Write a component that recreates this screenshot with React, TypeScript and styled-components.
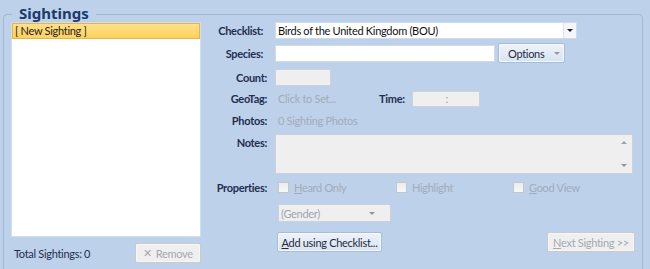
import React from 'react';
import styled, { createGlobalStyle } from 'styled-components';

const GlobalStyle = createGlobalStyle`
  html, body {
    margin: 0;
    padding: 0;
    background: #bdd1ea;
  }
  body {
    font-family: Lato, "Noto Sans", sans-serif;
    font-size: 11px;
    letter-spacing: -0.3px;
    color: #1f2a3d;
  }
`;

const Page = styled.div`
  width: 650px;
  height: 269px;
  overflow: hidden;
  box-sizing: border-box;
  padding: 14px 7px 0 3px;
`;

const Frame = styled.div`
  height: 280px;
  border: 1px solid #a3b7d1;
  border-radius: 4px;
  padding: 0 7px 0 7px;
  background: #bdd1ea;
`;

const Legend = styled.div`
  width: max-content;
  margin: -11px 0 0 1px;
  padding: 0 7px;
  height: 18px;
  line-height: 18px;
  background: #bdd1ea;
  font-family: "Noto Sans", sans-serif;
  font-weight: bold;
  font-size: 15px;
  letter-spacing: 0;
  color: #1d3a6b;
`;

const Body = styled.div`
  display: flex;
`;

const LeftColumn = styled.div`
  width: 191px;
  display: flex;
  flex-direction: column;
`;

const List = styled.div`
  height: 215px;
  box-sizing: border-box;
  background: #fff;
  border: 1px solid #d3deec;
`;

const ListItem = styled.div<{ selected?: boolean }>`
  height: 16px;
  line-height: 14px;
  padding-left: 2px;
  box-sizing: border-box;
  color: #222;
  ${p => p.selected && `
    background: linear-gradient(#ffe08a, #fdd25c);
    border: 1px solid #e5b54c;
  `}
`;

const Footer = styled.div`
  display: flex;
  align-items: center;
  justify-content: space-between;
  margin-top: 6px;
  padding-left: 3px;
`;

const FooterText = styled.span`
  color: #1f2f4f;
`;

const Button = styled.button<{ w: number; disabled?: boolean; start?: boolean }>`
  width: ${p => p.w}px;
  height: 20px;
  box-sizing: border-box;
  padding: 0 0 0 ${p => (p.start ? 9 : 0)}px;
  font: inherit;
  letter-spacing: inherit;
  white-space: nowrap;
  border-radius: 2px;
  display: inline-flex;
  align-items: center;
  justify-content: ${p => (p.start ? 'flex-start' : 'center')};
  gap: ${p => (p.start ? 0 : 4)}px;
  border: 1px solid ${p => (p.disabled ? '#cacaca' : '#a9bcd6')};
  color: ${p => (p.disabled ? '#a3a9b1' : '#1f2a3d')};
  background: ${p => (p.disabled
    ? '#efefef'
    : 'linear-gradient(#eef3fa, #d7e3f2)')};
  box-shadow: inset 0 0 0 1px ${p => (p.disabled ? '#f6f6f6' : '#f5f8fc')};
`;

const Form = styled.div`
  margin-left: 3px;
  flex: 1;
  display: flex;
  flex-direction: column;
`;

const Row = styled.div<{ top: number; h: number; align?: string }>`
  display: flex;
  align-items: ${p => p.align || 'center'};
  margin-top: ${p => p.top}px;
  height: ${p => p.h}px;
`;

const Label = styled.div<{ inset?: number }>`
  width: 63px;
  flex: none;
  box-sizing: border-box;
  padding-right: ${p => p.inset || 0}px;
  margin-right: 8px;
  text-align: right;
  white-space: nowrap;
  font-weight: bold;
  color: #1f2f4f;
  line-height: 17px;
`;

const Field = styled.div<{ w: number; disabled?: boolean; h?: number }>`
  width: ${p => p.w}px;
  height: ${p => p.h || 17}px;
  box-sizing: border-box;
  border: 1px solid ${p => (p.disabled ? '#cdd2d8' : '#d0dbe9')};
  background: ${p => (p.disabled ? '#efefef' : '#fff')};
  display: flex;
  align-items: center;
  position: relative;
  color: ${p => (p.disabled ? '#9da5b0' : '#111')};
  line-height: 15px;
  padding-left: 2px;
`;

const DropButton = styled.div<{ plain?: boolean }>`
  position: absolute;
  right: ${p => (p.plain ? 12 : 0)}px;
  top: 0;
  bottom: 0;
  width: 12px;
  display: flex;
  align-items: center;
  justify-content: center;
  border-left: ${p => (p.plain ? 'none' : '1px solid #dbe3ee')};
  background: ${p => (p.plain ? 'transparent' : '#f4f6f9')};
`;

const Arrow = styled.span<{ faded?: boolean }>`
  width: 0;
  height: 0;
  border-left: 3px solid transparent;
  border-right: 3px solid transparent;
  border-top: 3px solid ${p => (p.faded ? '#8f969f' : '#222')};
`;

const OptionsArrow = styled.span`
  margin-left: 10px;
  display: flex;
`;

const Muted = styled.span<{ w?: number }>`
  color: #a2acb9;
  padding-left: 3px;
  ${p => p.w && `width: ${p.w}px;`}
  line-height: 17px;
`;

const InlineLabel = styled.span`
  font-weight: bold;
  color: #1f2f4f;
  margin-right: 7px;
`;

const ScrollBar = styled.div`
  position: absolute;
  right: 0;
  top: 0;
  bottom: 0;
  width: 16px;
  display: flex;
  flex-direction: column;
  justify-content: space-between;
  align-items: center;
  padding: 6px 0;
  box-sizing: border-box;
`;

const UpArrow = styled.span`
  width: 0;
  height: 0;
  border-left: 3px solid transparent;
  border-right: 3px solid transparent;
  border-bottom: 3px solid #9aa0a8;
`;

const Checks = styled.div`
  display: flex;
  padding-left: 3px;
`;

const Check = styled.label<{ w: number }>`
  width: ${p => p.w}px;
  display: flex;
  align-items: center;
  color: #a2acb9;
  white-space: nowrap;
`;

const Box = styled.span`
  width: 11px;
  height: 11px;
  box-sizing: border-box;
  border: 1px solid #c3c7cd;
  background: linear-gradient(#ececec, #f8f8f8);
  margin-right: 5px;
`;

const Indent = styled.div<{ left: number }>`
  padding-left: ${p => p.left}px;
  display: flex;
`;

const ButtonRow = styled.div`
  display: flex;
  justify-content: space-between;
  padding-left: 2px;
  width: 358px;
`;

export default function App() {
  return (
    <Page>
      <GlobalStyle />
      <Frame>
        <Legend>Sightings</Legend>
        <Body>
          <LeftColumn>
            <List>
              <ListItem selected>[ New Sighting ]</ListItem>
            </List>
            <Footer>
              <FooterText>Total Sightings: 0</FooterText>
              <Button w={66} disabled>
                <span>✕</span>Remove
              </Button>
            </Footer>
          </LeftColumn>

          <Form>
            <Row top={0} h={17}>
              <Label inset={4}>Checklist:</Label>
              <Field w={302}>
                Birds of the United Kingdom (BOU)
                <DropButton><Arrow /></DropButton>
              </Field>
            </Row>

            <Row top={4} h={20}>
              <Label inset={4}>Species:</Label>
              <Field w={220} />
              <Button w={67} start style={{ marginLeft: 3 }}>
                Options<OptionsArrow><Arrow faded /></OptionsArrow>
              </Button>
            </Row>

            <Row top={6} h={17}>
              <Label>Count:</Label>
              <Field w={56} disabled />
            </Row>

            <Row top={4} h={17}>
              <Label>GeoTag:</Label>
              <Muted w={101}>Click to Set...</Muted>
              <InlineLabel>Time:</InlineLabel>
              <Field w={68} h={16} disabled style={{ justifyContent: 'center' }}>:</Field>
            </Row>

            <Row top={5} h={17}>
              <Label>Photos:</Label>
              <Muted>0 Sighting Photos</Muted>
            </Row>

            <Row top={5} h={40} align="flex-start">
              <Label>Notes:</Label>
              <Field w={358} h={40} disabled>
                <ScrollBar>
                  <UpArrow />
                  <Arrow faded />
                </ScrollBar>
              </Field>
            </Row>

            <Row top={5} h={17}>
              <Label>Properties:</Label>
              <Checks>
                <Check w={118}><Box /><span><u>H</u>eard Only</span></Check>
                <Check w={117}><Box /><span>Hi<u>g</u>hlight</span></Check>
                <Check w={100}><Box /><span><u>G</u>ood View</span></Check>
              </Checks>
            </Row>

            <Row top={8} h={18}>
              <Label />
              <Indent left={3}>
                <Field w={113} h={18} disabled>
                  (Gender)
                  <DropButton plain><Arrow faded /></DropButton>
                </Field>
              </Indent>
            </Row>

            <Row top={10} h={20}>
              <Label />
              <ButtonRow>
                <Button w={105}><span><u>A</u>dd using Checklist...</span></Button>
                <Button w={88} disabled><span><u>N</u>ext Sighting &gt;&gt;</span></Button>
              </ButtonRow>
            </Row>
          </Form>
        </Body>
      </Frame>
    </Page>
  );
}
